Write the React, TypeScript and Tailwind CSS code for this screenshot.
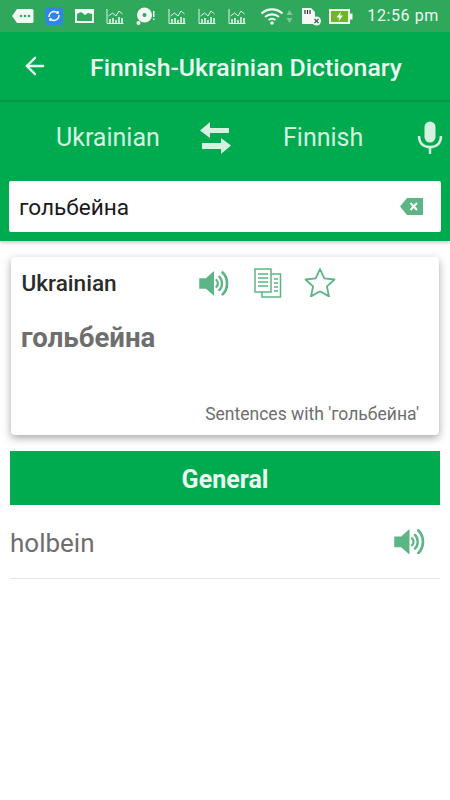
import React from "react";
import { ArrowLeft } from "lucide-react";

const Speaker = ({ size = 32 }: { size?: number }) => (
  <svg width={size} height={size * 0.8} viewBox="0 0 32 26" fill="none" className="shrink-0">
    <path d="M0 7.500h7L15.500 0v26L7 18.500H0z" fill="#5cb585" />
    <path d="M18 9.500c2 2 2 5 0 7" stroke="#5cb585" strokeWidth="2.400" strokeLinecap="round" />
    <path d="M21 6c3.800 3.500 3.800 10.500 0 14" stroke="#5cb585" strokeWidth="2.400" strokeLinecap="round" />
    <path d="M24.500 1.500c6.200 6 6.200 17 0 23" stroke="#5cb585" strokeWidth="2.800" strokeLinecap="round" />
  </svg>
);

const Chart = () => (
  <svg width="18" height="17" viewBox="0 0 18 17" fill="none" stroke="#e4f3e9" strokeWidth="1">
    <path d="M1 1v14.500h16.500" />
    <path d="M2.500 8l4-3 3.500 3 3-5 3.500 3" />
    <path d="M4 15v-4M7 15v-5M10 15v-3M13 15v-6M16 15v-5" strokeWidth="1.600" />
  </svg>
);

const StatusBar = () => (
  <div className="h-[32px] bg-[#2fa85c] flex items-center pl-[12px] pr-[11px] text-[#eef8f1]">
    <div className="flex items-center w-[245px] gap-[12px]">
      <svg width="22" height="16" viewBox="0 0 22 16" className="shrink-0">
        <path d="M5 1h15a1.500 1.500 0 0 1 1.500 1.500v11A1.500 1.500 0 0 1 20 15H5L0 8z" fill="#f2f8f4" />
        <circle cx="9" cy="8" r="1.300" fill="#2fa85c" />
        <circle cx="13" cy="8" r="1.300" fill="#2fa85c" />
        <circle cx="17" cy="8" r="1.300" fill="#2fa85c" />
      </svg>
      <svg width="18" height="18" viewBox="0 0 18 18" className="shrink-0 -ml-[1px]">
        <rect width="18" height="18" rx="3" fill="#2f86e6" />
        <path d="M4 10a5 5 0 0 1 7-5M14 8a5 5 0 0 1-7 5" stroke="#fff" strokeWidth="1.500" fill="none" />
        <circle cx="12.500" cy="5.500" r="1.500" fill="#fff" />
        <circle cx="5.500" cy="12.500" r="1.500" fill="#fff" />
      </svg>
      <svg width="19" height="16" viewBox="0 0 19 16" className="shrink-0">
        <path d="M0 1h19v14H0z" fill="#f2f8f4" />
        <path d="M2 6l4-2 4 3 3-2 4 1v7H2z" fill="#2fa85c" />
      </svg>
      <Chart />
      <svg width="20" height="20" viewBox="0 0 20 20" className="shrink-0">
        <circle cx="8.500" cy="9" r="7.500" fill="#f2f8f4" />
        <circle cx="8.500" cy="9" r="2" fill="#2fa85c" />
        <circle cx="2.500" cy="17" r="2" fill="#f2f8f4" />
        <rect x="17" y="5" width="1.500" height="6" fill="#f2f8f4" />
        <rect x="17" y="12.500" width="1.500" height="1.500" fill="#f2f8f4" />
      </svg>
      <Chart />
      <Chart />
      <Chart />
    </div>
    <svg width="24" height="18" viewBox="0 0 24 18" fill="none" className="shrink-0 ml-[3px]">
      <path d="M1.500 6.500c6-5.500 15-5.500 21 0" stroke="#f2f8f4" strokeWidth="2.200" />
      <path d="M5 10c4-3.500 10-3.500 14 0" stroke="#f2f8f4" strokeWidth="2.200" />
      <path d="M8.500 13c2-1.500 5-1.500 7 0" stroke="#f2f8f4" strokeWidth="2" />
      <circle cx="12" cy="16" r="1.800" fill="#f2f8f4" />
    </svg>
    <svg width="7" height="15" viewBox="0 0 7 15" className="shrink-0 ml-[2px]">
      <path d="M3.500 1L6.500 6h-6z" fill="#7fc99b" />
      <path d="M3.500 14L6.500 9h-6z" fill="#7fc99b" />
    </svg>
    <svg width="22" height="19" viewBox="0 0 22 19" className="shrink-0 ml-[8px]">
      <path d="M1 1h9l4 4v12H1z" fill="#f5f9f6" />
      <path d="M4 3v4M6.500 3v4M9 3v4" stroke="#333" strokeWidth="1.200" />
      <circle cx="15.500" cy="14" r="4.500" fill="#f5f9f6" />
      <path d="M13.500 12l4 4M17.500 12l-4 4" stroke="#3a6b4c" strokeWidth="1.400" />
    </svg>
    <svg width="24" height="15" viewBox="0 0 24 15" className="shrink-0 ml-[6px]">
      <rect x="0" y="0" width="21" height="15" fill="#f2f8f4" />
      <rect x="2" y="2" width="17" height="11" fill="#6fb52a" />
      <rect x="21" y="4.500" width="2.500" height="6" fill="#f2f8f4" />
      <path d="M12 2.500L7.500 8.500h3l-1 4 4.500-6h-3z" fill="#fff" />
    </svg>
    <span className="ml-auto text-[16px] tracking-[0.6px] whitespace-nowrap">12:56 pm</span>
  </div>
);

export default function App() {
  return (
    <div className="w-[450px] h-[800px] bg-white overflow-hidden font-['Roboto',sans-serif]">
      <StatusBar />
      <div className="h-[70px] bg-[#00ab50] border-b-2 border-[#04994a] flex items-center text-[#ecf9f1]">
        <ArrowLeft size={28} strokeWidth={2} className="ml-[21px] shrink-0" />
        <div className="ml-[41px] pt-[5px] text-[24.800px] font-medium leading-none whitespace-nowrap">Finnish-Ukrainian Dictionary</div>
      </div>
      <div className="h-[139px] bg-[#00ab50] shadow-[0_2px_3px_rgba(0,0,0,0.2)] px-[9px] pb-[9px] flex flex-col justify-end">
        <div className="flex items-center h-[70px] mb-[8px] text-[#d5f2e0] text-[25px] -mx-[9px]">
          <span className="ml-[56px] w-[104px]">Ukrainian</span>
          <svg width="31" height="32" viewBox="0 0 31 32" className="ml-[40px] shrink-0" fill="#d5f2e0">
            <path d="M10 0L0 8.500 10 16v-5h19V6H10z" />
            <path d="M21 16l10 7.500L21 32v-5H2v-6h19z" />
          </svg>
          <span className="ml-[52px] w-[80px]">Finnish</span>
          <svg width="26" height="34" viewBox="0 0 26 34" className="ml-[54px] shrink-0" fill="none">
            <rect x="7.500" y="0.500" width="11" height="21" rx="5.500" fill="#d5f2e0" />
            <path d="M2 15c0 8 5 11 11 11s11-3 11-11" stroke="#d5f2e0" strokeWidth="2.500" />
            <path d="M13 26v7" stroke="#d5f2e0" strokeWidth="2.500" />
          </svg>
        </div>
        <div className="h-[51px] bg-white rounded-[2px] flex items-center pl-[10px] pr-[18px]">
          <span className="text-[22.600px] text-[#1a1a1a] leading-none pt-[4px]">гольбейна</span>
          <svg width="23" height="17" viewBox="0 0 23 17" className="ml-auto shrink-0">
            <path d="M7 0h16v17H7L0 8.500z" fill="#5cb585" />
            <path d="M10.500 5l6.500 7M17 5l-6.500 7" stroke="#fff" strokeWidth="2" />
          </svg>
        </div>
      </div>
      <div className="mx-[11px] mt-[16px] h-[178px] bg-white rounded-[4px] shadow-[0_3px_9px_rgba(0,0,0,0.35)] flex flex-col px-[11px]">
        <div className="flex items-center h-[53px]">
          <span className="text-[22.600px] font-medium text-[#2b2b2b] w-[177px] -ml-[0.5px]">Ukrainian</span>
          <Speaker size={31} />
          <svg width="28" height="30" viewBox="0 0 28 30" fill="none" stroke="#5cb585" strokeWidth="1.500" className="ml-[24px] -mt-[2px] shrink-0">
            <path d="M1 1h16v23H1z" />
            <path d="M17 6h9.500v23H8v-5" />
            <path d="M4 6h10M4 10h10M4 14h10M4 18h10M20 11h4M20 15h4M20 19h4M20 23h4" />
          </svg>
          <svg width="32" height="30" viewBox="0 0 32 30" fill="none" stroke="#5cb585" strokeWidth="1.800" strokeLinejoin="round" className="ml-[22px] -mt-[3px] shrink-0">
            <path d="M16 2l4.300 9.400 10.200 1.100-7.600 6.900 2.100 10-9-5.100-9 5.100 2.100-10-7.600-6.900 10.200-1.100z" />
          </svg>
        </div>
        <div className="mt-[14px] -ml-[1px] text-[27.600px] font-bold text-[#6e6e6e] leading-none">гольбейна</div>
        <div className="mt-auto mb-[12px] text-right pr-[9px] text-[17.500px] text-[#6e6e6e] leading-none whitespace-nowrap">Sentences with 'гольбейна'</div>
      </div>
      <div className="mx-[10px] mt-[16px] h-[54px] pt-[4px] bg-[#00ab50] flex items-center justify-center text-[25px] font-bold text-[#ecf9f1]">General</div>
      <div className="mx-[10px] h-[74px] border-b border-[#e4e4e4] flex items-center justify-between pr-[14px]">
        <span className="text-[26px] text-[#6e6e6e] pt-[4px]">holbein</span>
        <Speaker size={32} />
      </div>
    </div>
  );
}
